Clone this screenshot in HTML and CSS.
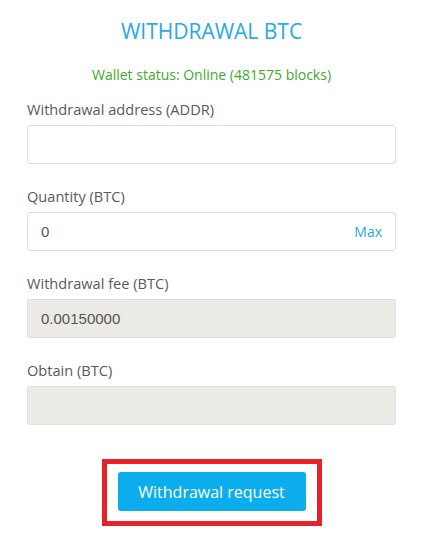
FILE: index.html
```html
<!DOCTYPE html>
<html>
<head>
<meta charset="utf-8">
<link rel="stylesheet" href="styles.css">
</head>
<body>
<div class="panel">
  <h1 class="title">WITHDRAWAL BTC</h1>
  <div class="status">Wallet status: Online (481575 blocks)</div>
  <div class="group">
    <div class="label">Withdrawal address (ADDR)</div>
    <div class="field"></div>
  </div>
  <div class="group">
    <div class="label">Quantity (BTC)</div>
    <div class="field"><span class="value">0</span><span class="max">Max</span></div>
  </div>
  <div class="group">
    <div class="label">Withdrawal fee (BTC)</div>
    <div class="field disabled"><span class="value">0.00150000</span></div>
  </div>
  <div class="group">
    <div class="label">Obtain (BTC)</div>
    <div class="field disabled"></div>
  </div>
  <div class="actions">
    <div class="highlight"><button class="btn">Withdrawal request</button></div>
  </div>
</div>
</body>
</html>
```
FILE: styles.css
```css
html, body { margin: 0; padding: 0; background: #fff; }
body { font-family: "Open Sans", "Liberation Sans", sans-serif; }
.panel { width: 369px; margin-left: 27px; }
.title {
  margin: 17px 0 0;
  font-size: 21px;
  line-height: 28px;
  font-weight: 400;
  color: #29a9e6;
  text-align: center;
}
.status {
  margin-top: 20px;
  text-align: center;
  color: #3dab2c;
  font-size: 14px;
  line-height: 20px;
}
.group { margin-top: 14px; }
.group + .group { margin-top: 22px; }
.label {
  font-size: 14.6px;
  line-height: 20px;
  color: #5a5a5a;
  margin-bottom: 6px;
}
.field {
  box-sizing: border-box;
  height: 39px;
  border: 1px solid #dcdfe6;
  border-radius: 3px;
  background: #fff;
  display: flex;
  align-items: center;
  justify-content: space-between;
  padding: 0 13px;
}
.field.disabled { background: #ebeae4; }
.value {
  font-family: "Liberation Sans", Arial, sans-serif;
  font-size: 15px;
  color: #555;
}
.max { color: #29a9e6; font-size: 14px; }
.actions {
  display: flex;
  justify-content: center;
  margin-top: 34px;
}
.highlight {
  border: 5px solid #e8202a;
  padding: 8px 11px 10px;
}
.btn {
  display: block;
  width: 188px;
  height: 39px;
  border: 0;
  border-radius: 3px;
  background: #0cadec;
  color: #fff;
  font-family: "Open Sans", "Liberation Sans", sans-serif;
  font-size: 16px;
}
```
